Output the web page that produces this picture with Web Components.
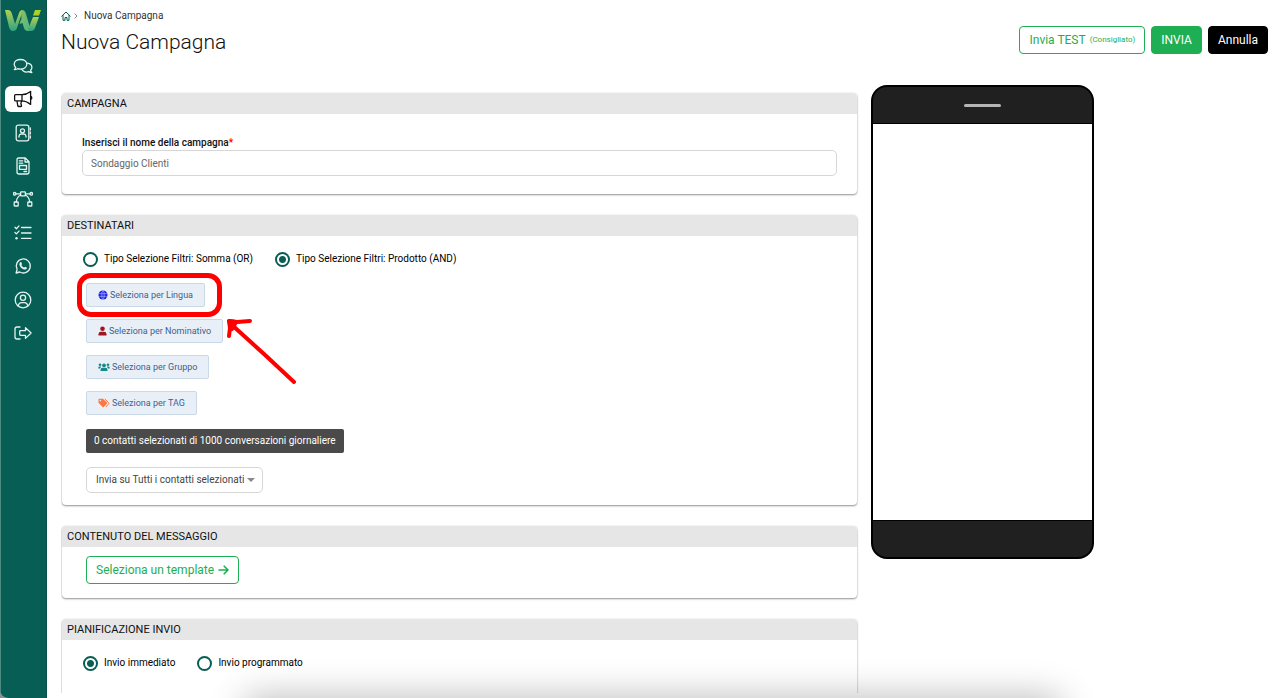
<!DOCTYPE html>
<html lang="it">
<head>
<meta charset="utf-8">
<meta name="viewport" content="width=device-width, initial-scale=1">
<title>Nuova Campagna</title>
<style>
  html { background: #8a8f8e; }
  body {
    margin: 0;
    font-family: Roboto, "Liberation Sans", sans-serif;
    font-size: 11px;
    line-height: 16px;
    color: #111;
    overflow: hidden;
    --green: #075e54;
    --accent: #1eae53;
  }
</style>
</head>
<body>
<campaign-app></campaign-app>

<script>
function define(name, html, setup) {
  const template = document.createElement('template');
  template.innerHTML = html;
  customElements.define(name, class extends HTMLElement {
    constructor() {
      super();
      this.attachShadow({ mode: 'open' }).append(template.content.cloneNode(true));
    }
    connectedCallback() {
      if (setup) setup(this, this.shadowRoot);
    }
  });
}

/* Brand mark */
define('brand-logo', `
  <style>
    :host { display: block; }
    svg { display: block; width: 36px; height: 23px; }
  </style>
  <svg viewBox="0 0 36 23" role="img" aria-label="Wi">
    <defs>
      <linearGradient id="a" x1="0" y1="0" x2="0" y2="1"><stop offset="0" stop-color="#b4d052"/><stop offset="1" stop-color="#2fa382"/></linearGradient>
      <linearGradient id="b" x1="0" y1="0" x2="1" y2="1"><stop offset="0" stop-color="#8cc35c"/><stop offset="1" stop-color="#48b38c"/></linearGradient>
    </defs>
    <path fill="url(#a)" d="M0 1h3Q6 1 7 5l3 10 4-11q1-3 4-3l-6 18q-1 3-4 3t-4-4Z"/>
    <path fill="url(#b)" d="M16 1h1q3 0 4 4l5 17h-3q-3 0-4-3l-1.500-5-3 1 1-3 1-2Z"/>
    <path fill="url(#a)" d="M28 8h6l-4 11q-1 3-4 3h-2l-1-2Z"/>
    <path fill="#a8d129" d="M30 1h6l-2 5.500h-6Z"/>
  </svg>`);

/* Main vertical menu */
define('side-menu', `
  <style>
    :host { display: block; background: var(--green); box-shadow: inset 1px 0 #4d8a82, inset -1px 0 #0a5048; box-sizing: border-box; padding: 9px 5px 0; color: #e3f3ef; }
    nav { display: grid; grid-template-rows: repeat(9, 1fr); height: 301px; margin-top: 17px; }
    a { display: flex; align-items: center; justify-content: center; align-self: center; height: 26px; border-radius: 6px; color: inherit; }
    a[aria-current] { background: #fff; color: #111; }
    svg { width: 20px; height: 20px; margin-right: 1px; fill: none; stroke: currentColor; stroke-width: 1.3; stroke-linecap: round; stroke-linejoin: round; }
    .f { fill: currentColor; stroke: none; }
  </style>
  <brand-logo></brand-logo>
  <nav aria-label="Menu principale">
    <a href="#chat" aria-label="Chat"><svg viewBox="0 0 20 20"><path d="M7.500 3.500c-3.600 0-6.300 2-6.300 4.700 0 1.300.6 2.400 1.500 3.300-.2.900-.7 1.600-1.400 2.200 1.300 0 2.400-.4 3.300-1 .9.300 1.900.5 2.900.5 3.600 0 6.300-2.200 6.300-5s-2.700-4.700-6.300-4.700Z"/><path d="M14.200 7.200c2.700.3 4.700 2.100 4.700 4.300 0 1.100-.5 2.100-1.300 2.800.2.900.6 1.600 1.200 2.200-1.100 0-2.100-.4-2.900-.9-3 .9-6-.1-7.200-2.300"/></svg></a>
    <a href="#campagne" aria-label="Campagne" aria-current="page"><svg viewBox="0 0 20 20"><path d="M9 5.700H2.600q-1 0-1 1v4.200q0 1 1 1H9ZM9 5.700c3 0 6-1.300 8.600-3.300v13C15 13.400 12 11.900 9 11.900M4 12l.8 4.800q.2.700.9.700h2q1 0 .8-.9l-.5-1.600q-.2-.5 0-1l.6-2M17.600 7.400q1.200 0 1.200 1.500t-1.200 1.500"/></svg></a>
    <a href="#rubrica" aria-label="Rubrica"><svg viewBox="0 0 20 20"><rect x="3.200" y="2.200" width="12.600" height="15.600" rx="2"/><path d="M17.300 5v2M17.300 9v2M17.300 13v2"/><circle cx="9.500" cy="7.800" r="2"/><path d="M6 14v-1q.3-2 2.200-2h2.600q1.900 0 2.200 2v1"/></svg></a>
    <a href="#template" aria-label="Template"><svg viewBox="0 0 20 20"><path d="M5.500 2h6.800L16 5.700V16q0 2-2 2H6q-2 0-2-2V3.500Q4 2 5.500 2ZM12 2v4h4M6.300 4.800h3.400M6.300 7.200h3.400M11 15.500h2.600"/><rect x="6.500" y="9.500" width="7" height="3.800"/></svg></a>
    <a href="#flussi" aria-label="Flussi"><svg viewBox="0 0 20 20"><rect x="7.600" y="2.800" width="4.800" height="4" rx=".6"/><rect x="1.200" y="13" width="4" height="4" rx=".6"/><rect x="14.800" y="13" width="4" height="4" rx=".6"/><circle cx="1.700" cy="4.800" r="1.300"/><circle cx="18.300" cy="4.800" r="1.300"/><path d="M3 4.800h4.600M12.400 4.800H17M7.600 6C5 7.300 3.600 9.600 3.200 13M12.400 6c2.600 1.300 4 3.600 4.400 7"/></svg></a>
    <a href="#attivita" aria-label="Attività"><svg viewBox="0 0 20 20"><path d="M2 4.300l1.400 1.400L6 2.900M2 9.500l1.400 1.400L6 8.100M8.500 4.500H18M8.500 10H18M8.500 15.300H18"/><circle class="f" cx="3.500" cy="15.300" r="1.200"/></svg></a>
    <a href="#whatsapp" aria-label="WhatsApp"><svg viewBox="0 0 20 20"><path d="M3.100 17l1-3.700A7 7 0 1 1 6.700 16Z"/><path class="f" d="M7.300 6.200c.5-.3.900-.2 1.100.3l.6 1.400c.1.400-.7 1.100-.6 1.400.6 1.100 1.400 1.700 2.500 2.200.4.100.9-1 1.300-.8l1.400.7c.6.400.1 1.500-.6 1.900-2.600 1.200-7-2.700-6.600-5.400.1-.8.500-1.400.9-1.700Z"/></svg></a>
    <a href="#profilo" aria-label="Profilo"><svg viewBox="0 0 20 20"><circle cx="10" cy="10" r="7.800"/><circle cx="10" cy="7.800" r="2.600"/><path d="M5.300 16q.4-3.300 3.400-3.300h2.600q3 0 3.400 3.300"/></svg></a>
    <a href="#esci" aria-label="Esci"><svg viewBox="0 0 20 20"><path d="M7 4H4Q2 4 2 6v8q0 2 2 2h3M12.500 4.600l5.600 5.400-5.600 5.400v-3H7.500q-.8 0-.8-.8V8.500q0-.8.800-.8h5Z"/></svg></a>
  </nav>`);

/* Push buttons of the page header and of the message panel */
define('action-button', `
  <style>
    :host { display: block; }
    button { display: flex; align-items: center; justify-content: center; gap: 4px; box-sizing: border-box; height: 28px; padding: 0 9px; border: 1px solid var(--accent); border-radius: 4px; background: #fff; color: var(--accent); font: 400 12px/16px Roboto, sans-serif; white-space: nowrap; }
    :host([kind="primary"]) button { background: var(--accent); color: #fff; }
    :host([kind="dark"]) button { background: #000; border-color: #000; color: #fff; }
  </style>
  <button type="button"><slot></slot></button>`);

define('page-header', `
  <style>
    :host { display: flex; justify-content: space-between; align-items: flex-start; padding-top: 8px; }
    ol { display: flex; align-items: center; list-style: none; margin: 0; padding: 0; font-size: 10px; color: #333; }
    li { display: flex; align-items: center; }
    a { display: flex; }
    svg { fill: none; stroke: var(--green); stroke-linecap: round; stroke-linejoin: round; }
    .sep { stroke: #888; margin: 0 6px 0 3px; }
    h1 { margin: 5px 0 0; font-size: 21px; line-height: 26px; font-weight: 300; }
    .actions { display: flex; gap: 6px; padding-top: 18px; }
    small { font-size: 8px; font-weight: 400; }
  </style>
  <div>
    <nav aria-label="Percorso"><ol>
      <li><a href="#home" aria-label="Home"><svg width="10" height="10" viewBox="0 0 10 10"><path d="M.7 5.200 5 1l4.300 4.200M2 4.500v4.800h2V6.500h2v2.800h2V4.500"/></svg></a><svg class="sep" width="4" height="6" viewBox="0 0 4 6"><path d="M.8.800 3 3 .8 5.200"/></svg></li>
      <li>Nuova Campagna</li>
    </ol></nav>
    <h1>Nuova Campagna</h1>
  </div>
  <div class="actions">
    <action-button>Invia TEST <small>(Consigliato)</small></action-button>
    <action-button kind="primary">INVIA</action-button>
    <action-button kind="dark">Annulla</action-button>
  </div>`);

/* Titled panel */
define('panel-card', `
  <style>
    :host { display: block; border-radius: 4px; background: #fff; box-shadow: 0 1px 2px rgba(0,0,0,.42), 0 0 2px rgba(0,0,0,.08); overflow: hidden; }
    h2 { margin: 0; padding: 0 5px; background: #e6e6e6; font-size: 11px; line-height: 21px; font-weight: 400; color: #111; }
  </style>
  <section><h2></h2><slot></slot></section>`,
  (host, root) => { root.querySelector('h2').textContent = host.getAttribute('heading'); });

define('name-field', `
  <style>
    :host { display: block; padding: 22px 20px 18px; }
    label { display: block; font-size: 10px; line-height: 14px; font-weight: 500; }
    span { color: #e00; }
    input { display: block; box-sizing: border-box; width: 100%; height: 26px; padding: 0 8px; border: 1px solid #d6d6d6; border-radius: 5px; background: #fff; color: #666; font: 10px/16px Roboto, sans-serif; }
  </style>
  <label for="name">Inserisci il nome della campagna<span>*</span></label>
  <input id="name" type="text" value="Sondaggio Clienti">`);

/* Group of radio buttons; options are separated by "|", the chosen one is given by its index */
define('radio-choice', `
  <style>
    :host { display: flex; gap: 22px; padding-left: 21px; }
    label { display: flex; align-items: center; gap: 6px; font-size: 10px; line-height: 16px; color: #000; }
    input { appearance: none; box-sizing: border-box; width: 15px; height: 15px; margin: 0; border: 2px solid var(--green); border-radius: 50%; background: #fff; }
    input:checked { background: radial-gradient(circle, var(--green) 3px, #fff 4px); }
  </style>`,
  (host, root) => {
    host.getAttribute('options').split('|').forEach((text, i) => {
      const label = document.createElement('label');
      const input = document.createElement('input');
      input.type = 'radio';
      input.name = 'choice';
      input.checked = i === Number(host.getAttribute('selected'));
      label.append(input, text);
      root.append(label);
    });
  });

define('filter-button', `
  <style>
    :host { display: block; width: max-content; }
    button { display: flex; align-items: center; gap: 2px; box-sizing: border-box; height: 24px; padding: 0 11px; border: 1px solid #c9d9e8; border-radius: 2px; background: #e9eff6; color: #3d5f92; font: 9px/16px Roboto, sans-serif; }
    ::slotted(svg) { display: block; height: 10px; }
  </style>
  <button type="button"><slot name="icon"></slot><slot></slot></button>`);

/* Hand-drawn hint round a control, with an arrow that points to it */
define('hint-marker', `
  <style>
    :host { display: block; position: relative; width: max-content; }
    .ring { position: absolute; inset: -10px -17px -10px -9px; border: 5px solid #fe0000; border-radius: 14px; pointer-events: none; }
    svg { position: absolute; left: 100%; top: 100%; margin: 8px 0 0 19px; width: 74px; height: 74px; overflow: visible; pointer-events: none; }
  </style>
  <slot></slot>
  <div class="ring"></div>
  <svg viewBox="0 0 74 74" fill="none" stroke="#fe0000" stroke-width="4" stroke-linecap="round" stroke-linejoin="round" aria-hidden="true">
    <path d="M70 67 40 39 8 10M26 6 13 7 5 6 6 13 5 21"/>
    <path d="M5 6 12 7 8 14Z" fill="#fe0000"/>
  </svg>`);

define('recipient-form', `
  <style>
    :host { display: block; padding: 15px 0 12px; }
    .list { display: flex; flex-direction: column; align-items: flex-start; gap: 12px; padding: 16px 24px 0; }
    output { display: block; width: max-content; box-sizing: border-box; height: 24px; margin: 14px 0 0 24px; padding: 0 8px; border-radius: 2px; background: #4a4a4a; color: #fff; font-size: 10px; line-height: 24px; }
    .pick { position: relative; width: max-content; margin: 14px 0 0 24px; }
    select { appearance: none; display: block; box-sizing: border-box; height: 26px; padding: 0 17px 0 9px; border: 1px solid #d6d6d6; border-radius: 5px; background: #fff; color: #444; font: 10px/16px Roboto, sans-serif; }
    .caret { position: absolute; right: 8px; top: 11px; border: 4px solid transparent; border-top-color: #888; border-bottom: 0; pointer-events: none; }
  </style>
  <radio-choice options="Tipo Selezione Filtri: Somma (OR)|Tipo Selezione Filtri: Prodotto (AND)" selected="1"></radio-choice>
  <div class="list">
    <hint-marker><filter-button>
      <svg slot="icon" width="10" viewBox="0 0 10 10"><circle cx="5" cy="5" r="4.500" fill="#1616e8"/><path d="M.5 3.600h9M.5 6.400h9M5 .5v9M5 .5C2.600 3 2.600 7 5 9.500 7.400 7 7.400 3 5 .5" fill="none" stroke="#c9d3fa" stroke-width=".5"/></svg>
      Seleziona per Lingua</filter-button></hint-marker>
    <filter-button>
      <svg slot="icon" width="9" viewBox="0 0 9 10" fill="#9d1622"><circle cx="4.500" cy="2.800" r="2.300"/><path d="M.5 9.500V8.200Q.5 5.800 3 5.800h3q2.500 0 2.500 2.400v1.300Z"/></svg>
      Seleziona per Nominativo</filter-button>
    <filter-button>
      <svg slot="icon" width="12" viewBox="0 0 12 10" fill="#168a8a"><circle cx="6" cy="3.300" r="1.900"/><circle cx="2" cy="2.800" r="1.300"/><circle cx="10" cy="2.800" r="1.300"/><path d="M2.500 9V7.700Q2.500 5.700 4.500 5.700h3q2 0 2 2V9ZM.2 6.500V6Q.2 4.600 1.600 4.600h1.600L2 6.500ZM11.800 6.500V6q0-1.400-1.400-1.400H8.800L10 6.500Z"/></svg>
      Seleziona per Gruppo</filter-button>
    <filter-button>
      <svg slot="icon" width="12" viewBox="0 0 12 10"><path fill="#ff7643" fill-rule="evenodd" d="M.5 1.200V4.700L4.600 8.900q.6.600 1.200 0L8.900 5.800q.6-.6 0-1.200L5 .700H1Q.5.700.5 1.200ZM2.400 1.800a.8.800 0 1 1 0 1.600.8.800 0 1 1 0-1.600Z"/><path fill="none" stroke="#ff7643" d="M6.800.9l4 3.900q.5.500 0 1L7.700 9"/></svg>
      Seleziona per TAG</filter-button>
  </div>
  <output>0 contatti selezionati di 1000 conversazioni giornaliere</output>
  <div class="pick"><select aria-label="Invio ai contatti"><option>Invia su Tutti i contatti selezionati</option></select><span class="caret"></span></div>`);

define('message-form', `
  <style>
    :host { display: flex; padding: 9px 24px 14px; }
    svg { fill: none; stroke: currentColor; stroke-width: 1.600; stroke-linecap: round; stroke-linejoin: round; }
  </style>
  <action-button>Seleziona un template <svg width="11" height="10" viewBox="0 0 11 10"><path d="M1 5h9M6.200 1.200 10 5 6.200 8.800"/></svg></action-button>`);

define('schedule-form', `
  <style>:host { display: block; padding: 15px 0 40px; }</style>
  <radio-choice options="Invio immediato|Invio programmato" selected="0"></radio-choice>`);

define('phone-preview', `
  <style>
    :host { display: flex; flex-direction: column; box-sizing: border-box; width: 223px; height: 474px; border: 2px solid #000; border-radius: 16px; background: #202020; overflow: hidden; }
    .top { display: flex; justify-content: center; align-items: center; height: 36px; border-bottom: 1px solid #000; }
    .top i { width: 37px; height: 3px; border-radius: 2px; background: #b5b5b5; }
    .screen { flex: 1; background: #fff; }
    .bottom { height: 36px; border-top: 1px solid #000; }
  </style>
  <div class="top"><i></i></div><div class="screen"></div><div class="bottom"></div>`);

define('campaign-app', `
  <style>
    :host { display: grid; grid-template-columns: 47px 1fr; height: 100vh; border-radius: 0 0 0 8px; background: #fff; overflow: hidden; position: relative; }
    main { display: flex; flex-direction: column; min-width: 0; min-height: 0; padding: 0 12px 5px 14px; }
    .columns { display: grid; grid-template-columns: 2fr 1fr; gap: 14px; flex: 1; min-height: 0; padding: 30px 0 0 1px; overflow: clip; }
    .forms { display: flex; flex-direction: column; gap: 21px; padding-top: 8px; min-width: 0; }
    panel-card { flex: none; }
    .dock { position: absolute; left: 20%; right: 18%; bottom: -20px; height: 10px; box-shadow: 0 0 36px 10px rgba(0,0,0,.3); pointer-events: none; }
  </style>
  <side-menu></side-menu>
  <main>
    <page-header></page-header>
    <div class="columns">
      <div class="forms">
        <panel-card heading="CAMPAGNA"><name-field></name-field></panel-card>
        <panel-card heading="DESTINATARI"><recipient-form></recipient-form></panel-card>
        <panel-card heading="CONTENUTO DEL MESSAGGIO"><message-form></message-form></panel-card>
        <panel-card heading="PIANIFICAZIONE INVIO"><schedule-form></schedule-form></panel-card>
      </div>
      <phone-preview></phone-preview>
    </div>
  </main>
  <div class="dock"></div>`);
</script>
</body>
</html>
